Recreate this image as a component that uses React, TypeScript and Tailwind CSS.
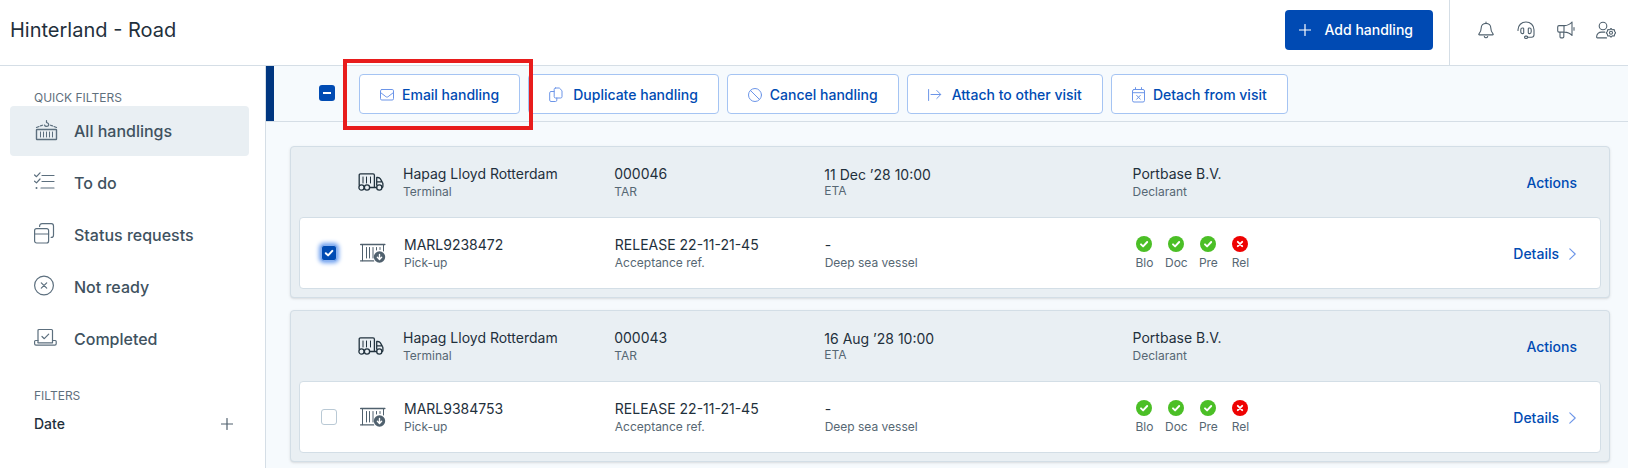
import type { ReactNode } from "react";

type IconProps = { w?: number; h?: number; className?: string; children: ReactNode };

function Icon({ w = 24, h = 24, className = "", children }: IconProps) {
  return (
    <svg
      width={w}
      height={h}
      viewBox={`0 0 ${w} ${h}`}
      fill="none"
      stroke="currentColor"
      strokeWidth={1.2}
      strokeLinecap="round"
      strokeLinejoin="round"
      aria-hidden="true"
      className={`shrink-0 ${className}`}
    >
      {children}
    </svg>
  );
}

const CraneContainerIcon = () => (
  <Icon>
    <rect x="2.5" y="10.5" width="20" height="10" rx="0.5" strokeWidth="1.4" />
    <path d="M6.5 13v5M9.5 13v5M12.5 13v5M15.5 13v5M18.5 13v5" strokeWidth="1" />
    <path d="M2.5 8.500 5 7.500M6.500 6.900 8.500 6.200M22.500 8.500 20 7.500M18.500 6.900 16.500 6.200M12.500 1.500v2c1.600.5 2.400 1.300 2.200 2.600-.3 1.700-3.700 1.800-4.200-.1" />
  </Icon>
);

const ChecklistIcon = () => (
  <Icon>
    <path d="M8 4.500h12M8 10.500h12M7 17h13M.6 4l1.900 1.700L6 1.800M.6 10.200l1.900 1.700L6 8" />
    <circle cx="2.500" cy="17" r="1" fill="currentColor" stroke="none" />
  </Icon>
);

const CardsIcon = () => (
  <Icon>
    <rect x="0.6" y="5.600" width="14" height="14.400" rx="2" />
    <path d="M.6 11h14M5.600 3.500c0-1.900.8-2.900 2.500-2.900h9.300c1.400 0 2.100.9 2.100 2.300v9.300c0 1.400-.8 2.200-2.300 2.200" />
  </Icon>
);

const CrossCircleIcon = () => (
  <Icon>
    <circle cx="10" cy="10.500" r="9.400" />
    <path d="m7.300 7.800 5.400 5.400M12.700 7.800l-5.400 5.400" />
  </Icon>
);

const LaptopCheckIcon = () => (
  <Icon>
    <path d="M4 15.500V3.500c0-.7.400-1 1-1h12.500c.6 0 1 .3 1 1v12" />
    <path d="M4 13.500H1.500c-.6 0-.9.300-.9.900v2.300c0 .9.500 1.400 1.400 1.400h18.800c.9 0 1.400-.5 1.400-1.400v-2.300c0-.6-.3-.9-.9-.9h-2.800M4 15.800h14.500" />
    <path d="m8 9.500 2.300 2.200 4.400-4.500" />
  </Icon>
);

const MailIcon = () => (
  <Icon w={14} h={14}>
    <rect x="0.5" y="1.500" width="13" height="10.500" rx="1.300" strokeWidth="1" />
    <path d="m.5 4.500 5.400 4.200c.7.500 1.500.5 2.200 0l5.400-4.200" strokeWidth="1" />
  </Icon>
);

const CopyIcon = () => (
  <Icon w={16} h={16}>
    <path
      strokeWidth="1"
      d="M6.500 1h3.800L13 3.700v6c0 .9-.5 1.300-1.300 1.300H6.500c-.8 0-1.300-.5-1.300-1.300V2.300C5.200 1.500 5.700 1 6.500 1ZM5 4.500H2c-.8 0-1.300.5-1.300 1.300v7.400c0 .8.5 1.300 1.300 1.300h4.500c.9 0 1.300-.5 1.300-1.300V11"
    />
  </Icon>
);

const BanIcon = () => (
  <Icon w={14} h={16}>
    <circle cx="7" cy="8" r="6.500" strokeWidth="1" />
    <path d="m2.500 3.500 9 9" strokeWidth="1" />
  </Icon>
);

const ArrowFromLineIcon = () => (
  <Icon w={16} h={16}>
    <path d="M.6 2.500v11M3 7.500h9.500M8.800 3.500l4 4-4 4" strokeWidth="1" />
  </Icon>
);

const CalendarXIcon = () => (
  <Icon w={13} h={16}>
    <rect x="0.5" y="2.500" width="12" height="12.500" rx="1.500" strokeWidth="1" />
    <path d="M.5 5.700h12M3.500.6v2M9.500.6v2M4.700 8.400l3.600 3.800M8.300 8.400l-3.600 3.800" strokeWidth="1" />
  </Icon>
);

const PlusIcon = () => (
  <Icon w={12} h={12}>
    <path d="M6 .5v11M.5 6h11" />
  </Icon>
);

const BellIcon = () => (
  <Icon w={16} h={18}>
    <path
      strokeWidth="1.100"
      d="M8 1v1.400c-3 0-4.800 2-4.800 4.700 0 3.200-.9 4.300-2.200 5.700-.5.600-.2 1.100.5 1.100h13c.7 0 1-.5.500-1.100-1.300-1.400-2.200-2.500-2.200-5.700 0-2.700-1.800-4.700-4.800-4.700M6.300 15.500c.3.900.9 1.300 1.700 1.300s1.400-.4 1.700-1.300"
    />
  </Icon>
);

const HeadsetIcon = () => (
  <Icon w={18} h={18}>
    <path
      strokeWidth="1.100"
      d="M1 9.500V8.800C1 4.400 4.500 1 9 1s8 3.400 8 7.800v5c0 1.500-1 2.500-2.500 2.500h-3.800"
    />
    <path
      strokeWidth="1.100"
      d="M5.500 7h.4c.5 0 .8.300.8.800v4c0 .5-.3.800-.8.800h-.4c-1 0-1.700-.8-1.700-1.800v-2C3.800 7.800 4.500 7 5.500 7ZM12.500 7h-.4c-.5 0-.8.300-.8.800v4c0 .5.300.8.800.8h.4c1 0 1.700-.8 1.700-1.800v-2c0-1-.7-1.800-1.700-1.800Z"
    />
    <rect x="7.500" y="15.100" width="3.200" height="2.300" rx="1.100" strokeWidth="1.100" />
  </Icon>
);

const MegaphoneIcon = () => (
  <Icon w={18} h={18}>
    <path
      strokeWidth="1.100"
      d="M15 1v13.500c-2-2.200-4.500-3.400-7.500-3.400H2c-.8 0-1.300-.5-1.300-1.300V5.900c0-.8.5-1.300 1.300-1.300h5.500c3 0 5.500-1.300 7.500-3.600ZM7 4.600v6.500M3 11.200v4.600c0 .7.400 1.100 1 1.100h1.700c.7 0 1.100-.4 1.100-1.100v-4.600M17 6.500v2.700"
    />
  </Icon>
);

const UserGearIcon = () => (
  <Icon w={20} h={18}>
    <circle cx="7" cy="5" r="3.800" strokeWidth="1.100" />
    <path d="M10.500 16.900H1.300c-.5 0-.7-.3-.7-.8 0-3.100 2.200-5 5-5h3.200" strokeWidth="1.100" />
    <path
      strokeWidth="1.100"
      d="m15 7.500 1.300 1.300 1.900-.2.500 1.900 1 1.300-1 1.300-.5 1.900-1.900-.1L15 16.200l-1.300-1.300-1.900.1-.5-1.900-1-1.300 1-1.300.5-1.900 1.900.2Z"
    />
    <circle cx="15" cy="11.800" r="1.500" strokeWidth="1.100" />
  </Icon>
);

const TruckIcon = () => (
  <Icon w={26} h={18} className="text-[#22333f]">
    <path
      strokeWidth="1.300"
      d="M1.200 12V2.200c0-.8.500-1.300 1.300-1.300h12.600c.8 0 1.300.5 1.300 1.300v12.300M11.700 14.500h6.900M18.700 4.500h1.100c1.200 0 2 .4 2.600 1.400l2 3.400c.4.600.5 1.100.5 1.800v2.400c0 .7-.4 1-1 1M18.700 12V4.700M18.700 8.800h5.500"
    />
    <path d="M5 4v6M8.500 4v6M12.500 4v6" strokeWidth="1" />
    <circle cx="3.500" cy="14.500" r="2.600" strokeWidth="1.300" />
    <circle cx="9" cy="14.500" r="2.600" strokeWidth="1.300" />
    <circle cx="21.300" cy="14.500" r="2.600" strokeWidth="1.300" />
  </Icon>
);

const ContainerDownIcon = () => (
  <Icon w={26} h={20} className="text-[#50616e]">
    <path d="M.6 1.500h24.300M.6 17.900h13" strokeWidth="1.300" />
    <path d="M2.500 1.500v16.300M23.500 1.500V8M6.500 4.500v10.500M9.500 4.500v10.500M13 4.500v10.500M16.500 4.500V7M20 4.500V6.500" strokeWidth="1" />
    <circle cx="19.500" cy="14" r="5.700" fill="currentColor" stroke="none" />
    <path d="M19.500 11.500v4.700M17.400 14.300l2.100 2.100 2.100-2.100" stroke="#fff" strokeWidth="1.400" />
  </Icon>
);

function StatusIcon({ ok }: { ok: boolean }) {
  return (
    <svg width="16" height="16" viewBox="0 0 16 16" fill="none" aria-hidden="true">
      <circle cx="8" cy="8" r="8" fill={ok ? "#4bbf26" : "#ee0202"} />
      <path
        d={ok ? "m5 8.300 2.100 2.100L11.200 6" : "m5.800 5.800 4.400 4.400M10.200 5.800l-4.400 4.400"}
        stroke="#fff"
        strokeWidth="1.900"
        strokeLinecap="round"
        strokeLinejoin="round"
      />
    </svg>
  );
}

const quickFilters = [
  { label: "All handlings", icon: <CraneContainerIcon />, active: true },
  { label: "To do", icon: <ChecklistIcon /> },
  { label: "Status requests", icon: <CardsIcon /> },
  { label: "Not ready", icon: <CrossCircleIcon /> },
  { label: "Completed", icon: <LaptopCheckIcon /> },
];

const headerLinks = [
  { label: "Notifications", icon: <BellIcon /> },
  { label: "Support", icon: <HeadsetIcon /> },
  { label: "Announcements", icon: <MegaphoneIcon /> },
  { label: "Account settings", icon: <UserGearIcon /> },
];

const bulkActions = [
  { label: "Email handling", icon: <MailIcon />, highlighted: true },
  { label: "Duplicate handling", icon: <CopyIcon /> },
  { label: "Cancel handling", icon: <BanIcon /> },
  { label: "Attach to other visit", icon: <ArrowFromLineIcon /> },
  { label: "Detach from visit", icon: <CalendarXIcon /> },
];

const statuses = [
  { label: "Blo", ok: true },
  { label: "Doc", ok: true },
  { label: "Pre", ok: true },
  { label: "Rel", ok: false },
];

type Visit = { tar: string; eta: string; container: string; selected: boolean };

const visits: Visit[] = [
  { tar: "000046", eta: "11 Dec ’28 10:00", container: "MARL9238472", selected: true },
  { tar: "000043", eta: "16 Aug ’28 10:00", container: "MARL9384753", selected: false },
];

function Field({ value, label, dense = false }: { value: string; label: string; dense?: boolean }) {
  return (
    <div className="min-w-0">
      <div className={`text-sm text-[#1f303c] ${dense ? "leading-[18px]" : "leading-5"}`}>{value}</div>
      <div className={`text-xs text-[#566773] ${dense ? "leading-[14px]" : "leading-4"}`}>{label}</div>
    </div>
  );
}

function VisitCard({ visit }: { visit: Visit }) {
  return (
    <article className="rounded border border-[#d3dee6] bg-[#e9eff3] px-2 pb-2 shadow-sm">
      <div className="flex h-[70px] items-center pr-6">
        <div className="flex w-[104px] shrink-0 justify-end pr-[19px]">
          <TruckIcon />
        </div>
        <div className="grid flex-1 grid-cols-[211fr_210fr_308fr_444fr] items-center">
          <Field value="Hapag Lloyd Rotterdam" label="Terminal" />
          <Field value={visit.tar} label="TAR" />
          <Field value={visit.eta} label="ETA" dense />
          <div className="flex items-center justify-between">
            <Field value="Portbase B.V." label="Declarant" />
            <button type="button" className="pt-0.5 text-sm font-medium text-[#004bb3]">
              Actions
            </button>
          </div>
        </div>
      </div>
      <div className="flex h-[72px] items-center rounded border border-[#d3dee6] bg-white pr-6">
        <div className="flex w-[104px] shrink-0 items-center justify-between pr-[18px] pl-[21px]">
          <span className="relative flex">
            <input
              type="checkbox"
              defaultChecked={visit.selected}
              aria-label={`Select ${visit.container}`}
              className="peer size-4 appearance-none rounded-[3px] border border-[#b9c9d5] bg-white checked:border-[#8db3ee] checked:bg-[#004bb3] checked:shadow-[0_0_4px_2px_#6c9ff0]"
            />
            <svg
              viewBox="0 0 16 16"
              fill="none"
              aria-hidden="true"
              className="pointer-events-none absolute inset-0 hidden peer-checked:block"
            >
              <path d="m4.800 8.200 2.300 2.200 4.200-4.500" stroke="#fff" strokeWidth="2" strokeLinecap="round" strokeLinejoin="round" />
            </svg>
          </span>
          <ContainerDownIcon />
        </div>
        <div className="grid flex-1 grid-cols-[211fr_210fr_308fr_444fr] items-center">
          <Field value={visit.container} label="Pick-up" />
          <Field value="RELEASE 22-11-21-45" label="Acceptance ref." />
          <Field value="-" label="Deep sea vessel" />
          <div className="flex items-center justify-between">
            <ul className="-ml-1 flex">
              {statuses.map((s) => (
                <li key={s.label} className="flex w-8 flex-col items-center">
                  <span className="flex h-5 items-center">
                    <StatusIcon ok={s.ok} />
                  </span>
                  <span className="text-xs leading-[18px] text-[#566773]">{s.label}</span>
                </li>
              ))}
            </ul>
            <a href="#details" className="flex items-center gap-2.5 pt-0.5 text-sm font-medium text-[#004bb3]">
              Details
              <Icon w={7} h={12} className="text-[#6c95e8]">
                <path d="m.8.8 5.400 5.200L.8 11.200" strokeWidth="1.100" />
              </Icon>
            </a>
          </div>
        </div>
      </div>
    </article>
  );
}

export default function App() {
  return (
    <div className="flex min-h-screen flex-col bg-white font-['Inter',sans-serif]">
      <header className="flex h-[66px] border-b border-[#d5dee6]">
        <h1 className="flex flex-1 items-center pb-1.5 pl-2.5 text-xl text-[#1f303c]">Hinterland - Road</h1>
        <div className="pt-2.5 pr-4">
          <button
            type="button"
            className="flex h-10 items-center gap-3.5 rounded bg-[#004ab3] pr-5 pl-3.5 text-sm font-medium text-white"
          >
            <PlusIcon />
            Add handling
          </button>
        </div>
        <nav className="flex items-center border-l border-[#d5dee6] pr-0.5 pb-1.5 pl-4 text-[#50616e]">
          {headerLinks.map((l) => (
            <a key={l.label} href="#menu" aria-label={l.label} className="flex w-10 justify-center">
              {l.icon}
            </a>
          ))}
        </nav>
      </header>

      <div className="flex flex-1">
        <aside className="w-[266px] shrink-0 border-r border-[#d5dee6] pr-4 pl-2.5">
          <h2 className="pt-6 pl-6 text-xs leading-4 text-[#5f707d]">QUICK FILTERS</h2>
          <nav className="flex flex-col gap-0.5">
            {quickFilters.map((f) => (
              <a
                key={f.label}
                href="#filter"
                aria-current={f.active ? "page" : undefined}
                className={`flex h-[50px] items-center gap-4 rounded pl-6 text-base font-medium text-[#40525f] ${
                  f.active ? "bg-[#e9eff3]" : ""
                }`}
              >
                <span className="text-[#5c6f7e]">{f.icon}</span>
                {f.label}
              </a>
            ))}
          </nav>
          <h2 className="pt-6 pl-6 text-xs leading-4 text-[#5f707d]">FILTERS</h2>
          <button
            type="button"
            className="flex h-10 w-full items-center justify-between pr-4 pl-6 text-sm font-medium text-[#1f303c]"
          >
            Date
            <span className="text-[#50616e]">
              <PlusIcon />
            </span>
          </button>
        </aside>

        <main className="min-w-0 flex-1 bg-[#f6fafd]">
          <div className="flex h-14 border-b border-[#d5dee6]">
            <div className="w-2 shrink-0 bg-[#003680]" />
            <div className="flex flex-1 items-center pl-[45px]">
              <span className="relative mr-6 flex pb-0.5">
                <input
                  type="checkbox"
                  defaultChecked
                  ref={(el) => {
                    if (el) el.indeterminate = true;
                  }}
                  aria-label="Select all handlings"
                  className="size-4 appearance-none rounded-[3px] bg-[#004bb3]"
                />
                <span className="pointer-events-none absolute top-[7px] left-1 h-0.5 w-2 bg-white" />
              </span>
              <div className="flex gap-2">
                {bulkActions.map((a) => (
                  <div key={a.label} className="relative">
                    <button
                      type="button"
                      className="flex h-10 items-center gap-2 rounded border border-[#a5c4f3] bg-white px-5 pt-0.5 text-sm font-medium text-[#004bb3]"
                    >
                      <span className="text-[#6c95e8]">{a.icon}</span>
                      {a.label}
                    </button>
                    {a.highlighted && (
                      <div className="pointer-events-none absolute -top-[15px] -right-[13px] -bottom-4 -left-4 z-10 border-4 border-[#e81c1c]" />
                    )}
                  </div>
                ))}
              </div>
            </div>
          </div>
          <div className="flex flex-col gap-3 pt-6 pr-[18px] pl-6">
            {visits.map((v) => (
              <VisitCard key={v.tar} visit={v} />
            ))}
          </div>
        </main>
      </div>
    </div>
  );
}
